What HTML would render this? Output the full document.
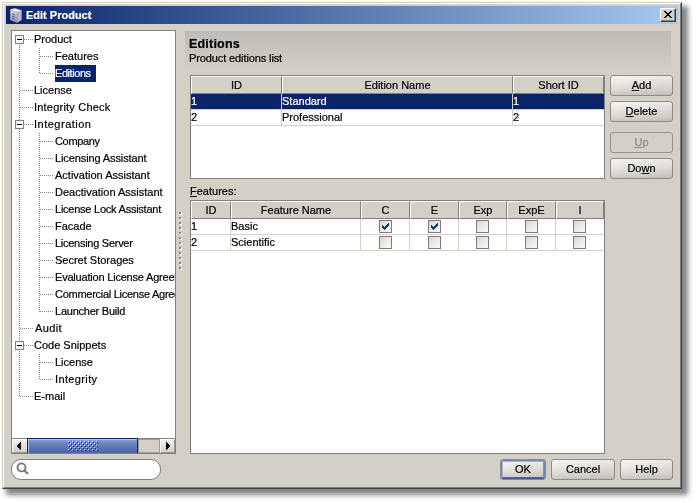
<!DOCTYPE html><html><head><meta charset="utf-8"><style>
*{margin:0;padding:0;box-sizing:border-box}
html,body{width:696px;height:503px;background:#fff;overflow:hidden;position:relative;-webkit-font-smoothing:antialiased;will-change:transform;font-family:"Liberation Sans",sans-serif;font-size:11px;color:#000}
div,span{position:absolute}
.t{white-space:nowrap;line-height:13px;height:13px;-webkit-text-stroke:0.2px currentColor}
.dh{height:1px;background:repeating-linear-gradient(to right,#808080 0 1px,transparent 1px 2px)}
.dv{width:1px;background:repeating-linear-gradient(to bottom,#808080 0 1px,transparent 1px 2px)}
.pb{width:9px;height:9px;border:1px solid #808080;background:#fff}
.pb:after{content:"";position:absolute;left:1px;top:3px;width:5px;height:1px;background:#000}
.hc{background:#D4D0C8;border-top:1px solid #fff;border-left:1px solid #fff;border-right:1px solid #808080;border-bottom:1px solid #808080;text-align:center;line-height:15px;height:18px}
.cb{width:13px;height:13px;border:1px solid #7B7B7B;background:linear-gradient(135deg,#D9D6CE 0%,#EBEAE5 50%,#F9F9F7 100%)}
.btn{border:1px solid #8D8B85;border-radius:3px;background:linear-gradient(to right,rgba(255,255,255,0.06),rgba(0,0,0,0.05)),linear-gradient(#F6F5F2 0%,#E9E7E2 40%,#DAD7D0 75%,#CBC7BD 100%);text-align:center;line-height:19px}
u{text-decoration:underline;text-decoration-thickness:1px;text-underline-offset:1px}
</style></head><body>
<div style="left:2px;top:2px;width:680px;height:487px;background:#D4D0C8;border-top:1px solid #D4D0C8;border-left:1px solid #D4D0C8;border-right:1px solid #404040;border-bottom:1px solid #404040;box-shadow:5px 5px 5px 1px rgba(0,0,0,0.48)"><div style="left:0;top:0;right:0;bottom:0;border-top:1px solid #fff;border-left:1px solid #fff;border-right:1px solid #808080;border-bottom:1px solid #808080"></div></div>
<div style="left:6px;top:6px;width:672px;height:18px;background:linear-gradient(to right,#0A246A,#A6CAF0)"></div>
<svg style="position:absolute;left:9px;top:7px" width="16" height="16" viewBox="0 0 16 16">
<defs><linearGradient id="ig" x1="0" y1="0" x2="0" y2="1"><stop offset="0" stop-color="#D6D8EA"/><stop offset="1" stop-color="#8E90B0"/></linearGradient>
<linearGradient id="ig2" x1="0" y1="0" x2="1" y2="0"><stop offset="0" stop-color="#9496B4"/><stop offset="0.5" stop-color="#C4C6DC"/><stop offset="1" stop-color="#A0A2BE"/></linearGradient></defs>
<path d="M1 2 L6 1 L13 3 L13 13 L8 16 L1 13 Z" fill="#6E7090"/>
<path d="M1.5 2.5 L6 1.5 L12.5 3.5 L8 5.5 Z" fill="#ECEDF6"/>
<path d="M1.5 2.5 L8 5.5 L8 15.5 L1.5 12.8 Z" fill="url(#ig)"/>
<path d="M8 5.5 L12.5 3.5 L12.5 12.8 L8 15.5 Z" fill="url(#ig2)"/>
<path d="M3 7 L6 8 M3 9 L6 10 M3 11 L6 12" stroke="#5A5C7E" stroke-width="0.9"/>
</svg>
<div class="t" style="left:26px;top:9px;font-weight:bold;color:#fff">Edit Product</div>
<div style="left:660px;top:8px;width:16px;height:14px;background:#D4D0C8;border-top:1px solid #fff;border-left:1px solid #fff;border-right:1px solid #404040;border-bottom:1px solid #404040"><div style="left:0;top:0;width:14px;height:12px;border-right:1px solid #808080;border-bottom:1px solid #808080"></div></div>
<svg style="position:absolute;left:664px;top:11px" width="8" height="7" shape-rendering="crispEdges"><rect x="0" y="0" width="1" height="1"/><rect x="1" y="0" width="1" height="1"/><rect x="6" y="0" width="1" height="1"/><rect x="7" y="0" width="1" height="1"/><rect x="1" y="1" width="1" height="1"/><rect x="2" y="1" width="1" height="1"/><rect x="5" y="1" width="1" height="1"/><rect x="6" y="1" width="1" height="1"/><rect x="2" y="2" width="1" height="1"/><rect x="3" y="2" width="1" height="1"/><rect x="4" y="2" width="1" height="1"/><rect x="5" y="2" width="1" height="1"/><rect x="3" y="3" width="1" height="1"/><rect x="4" y="3" width="1" height="1"/><rect x="2" y="4" width="1" height="1"/><rect x="3" y="4" width="1" height="1"/><rect x="4" y="4" width="1" height="1"/><rect x="5" y="4" width="1" height="1"/><rect x="1" y="5" width="1" height="1"/><rect x="2" y="5" width="1" height="1"/><rect x="5" y="5" width="1" height="1"/><rect x="6" y="5" width="1" height="1"/><rect x="0" y="6" width="1" height="1"/><rect x="1" y="6" width="1" height="1"/><rect x="6" y="6" width="1" height="1"/><rect x="7" y="6" width="1" height="1"/></svg>
<div style="left:11px;top:30px;width:165px;height:424px;background:#fff;border:1px solid #808080;overflow:hidden">
<div class="dv" style="left:7px;top:14px;height:352px"></div>
<div class="dv" style="left:27px;top:17px;height:26px"></div>
<div class="dv" style="left:27px;top:102px;height:179px"></div>
<div class="dv" style="left:27px;top:323px;height:26px"></div>
<div class="dh" style="left:12px;top:8px;width:10px"></div>
<div class="pb" style="left:3px;top:4px"></div>
<div class="t" style="left:22px;top:2px;">Product</div>
<div class="dh" style="left:28px;top:25px;width:14px"></div>
<div class="t" style="left:43px;top:19px;">Features</div>
<div class="dh" style="left:28px;top:42px;width:14px"></div>
<div style="left:43px;top:34px;width:41px;height:17px;background:#0A246A"></div>
<div class="t" style="left:43px;top:36px;color:#fff;letter-spacing:-0.43px;">Editions</div>
<div class="dh" style="left:8px;top:59px;width:14px"></div>
<div class="t" style="left:22px;top:53px;">License</div>
<div class="dh" style="left:8px;top:76px;width:14px"></div>
<div class="t" style="left:22px;top:70px;letter-spacing:0.21px;">Integrity Check</div>
<div class="dh" style="left:12px;top:93px;width:10px"></div>
<div class="pb" style="left:3px;top:89px"></div>
<div class="t" style="left:22px;top:87px;letter-spacing:0.5px;">Integration</div>
<div class="dh" style="left:28px;top:110px;width:14px"></div>
<div class="t" style="left:43px;top:104px;letter-spacing:-0.33px;">Company</div>
<div class="dh" style="left:28px;top:127px;width:14px"></div>
<div class="t" style="left:43px;top:121px;letter-spacing:-0.11px;">Licensing Assistant</div>
<div class="dh" style="left:28px;top:144px;width:14px"></div>
<div class="t" style="left:43px;top:138px;">Activation Assistant</div>
<div class="dh" style="left:28px;top:161px;width:14px"></div>
<div class="t" style="left:43px;top:155px;">Deactivation Assistant</div>
<div class="dh" style="left:28px;top:178px;width:14px"></div>
<div class="t" style="left:43px;top:172px;letter-spacing:-0.24px;">License Lock Assistant</div>
<div class="dh" style="left:28px;top:195px;width:14px"></div>
<div class="t" style="left:43px;top:189px;">Facade</div>
<div class="dh" style="left:28px;top:212px;width:14px"></div>
<div class="t" style="left:43px;top:206px;letter-spacing:-0.27px;">Licensing Server</div>
<div class="dh" style="left:28px;top:229px;width:14px"></div>
<div class="t" style="left:43px;top:223px;">Secret Storages</div>
<div class="dh" style="left:28px;top:246px;width:14px"></div>
<div class="t" style="left:43px;top:240px;letter-spacing:-0.2px;">Evaluation License Agreement</div>
<div class="dh" style="left:28px;top:263px;width:14px"></div>
<div class="t" style="left:43px;top:257px;letter-spacing:-0.27px;">Commercial License Agreement</div>
<div class="dh" style="left:28px;top:280px;width:14px"></div>
<div class="t" style="left:43px;top:274px;letter-spacing:-0.23px;">Launcher Build</div>
<div class="dh" style="left:8px;top:297px;width:14px"></div>
<div class="t" style="left:23px;top:291px;letter-spacing:0.4px;">Audit</div>
<div class="dh" style="left:12px;top:314px;width:10px"></div>
<div class="pb" style="left:3px;top:310px"></div>
<div class="t" style="left:22px;top:308px;">Code Snippets</div>
<div class="dh" style="left:28px;top:331px;width:14px"></div>
<div class="t" style="left:43px;top:325px;">License</div>
<div class="dh" style="left:28px;top:348px;width:14px"></div>
<div class="t" style="left:43px;top:342px;letter-spacing:0.37px;">Integrity</div>
<div class="dh" style="left:8px;top:365px;width:14px"></div>
<div class="t" style="left:22px;top:359px;">E-mail</div>
</div>
<div style="left:12px;top:438px;width:163px;height:1px;background:#808080"></div>
<div style="left:12px;top:439px;width:15px;height:14px;background:linear-gradient(#F2F1EC,#D4D0C8);border-left:1px solid #fff;border-top:1px solid #fff;border-bottom:1px solid #9A9791"></div>
<svg style="position:absolute;left:17px;top:442px" width="4" height="8" shape-rendering="crispEdges"><rect x="3" y="0" width="1" height="1"/><rect x="2" y="1" width="1" height="1"/><rect x="3" y="1" width="1" height="1"/><rect x="1" y="2" width="1" height="1"/><rect x="2" y="2" width="1" height="1"/><rect x="3" y="2" width="1" height="1"/><rect x="0" y="3" width="1" height="1"/><rect x="1" y="3" width="1" height="1"/><rect x="2" y="3" width="1" height="1"/><rect x="3" y="3" width="1" height="1"/><rect x="0" y="4" width="1" height="1"/><rect x="1" y="4" width="1" height="1"/><rect x="2" y="4" width="1" height="1"/><rect x="3" y="4" width="1" height="1"/><rect x="1" y="5" width="1" height="1"/><rect x="2" y="5" width="1" height="1"/><rect x="3" y="5" width="1" height="1"/><rect x="2" y="6" width="1" height="1"/><rect x="3" y="6" width="1" height="1"/><rect x="3" y="7" width="1" height="1"/></svg>
<div style="left:27px;top:438px;width:111px;height:15px;border:1px solid #0A246A;border-bottom:none;background:linear-gradient(#8FA6D4 0%,#6D86C0 30%,#5571B0 70%,#4A64A6 100%)"><div style="left:0;top:0;width:1px;height:14px;background:#A8C4F0"></div><div style="left:0;top:0;width:109px;height:1px;background:#A8C8F8"></div></div>
<svg style="position:absolute;left:68px;top:441px" width="31" height="11" shape-rendering="crispEdges"><rect x="0" y="0" width="1" height="1" fill="#E4ECFF"/><rect x="1" y="1" width="1" height="1" fill="#0C2A7A"/><rect x="4" y="0" width="1" height="1" fill="#E4ECFF"/><rect x="5" y="1" width="1" height="1" fill="#0C2A7A"/><rect x="8" y="0" width="1" height="1" fill="#E4ECFF"/><rect x="9" y="1" width="1" height="1" fill="#0C2A7A"/><rect x="12" y="0" width="1" height="1" fill="#E4ECFF"/><rect x="13" y="1" width="1" height="1" fill="#0C2A7A"/><rect x="16" y="0" width="1" height="1" fill="#E4ECFF"/><rect x="17" y="1" width="1" height="1" fill="#0C2A7A"/><rect x="20" y="0" width="1" height="1" fill="#E4ECFF"/><rect x="21" y="1" width="1" height="1" fill="#0C2A7A"/><rect x="24" y="0" width="1" height="1" fill="#E4ECFF"/><rect x="25" y="1" width="1" height="1" fill="#0C2A7A"/><rect x="28" y="0" width="1" height="1" fill="#E4ECFF"/><rect x="29" y="1" width="1" height="1" fill="#0C2A7A"/><rect x="2" y="2" width="1" height="1" fill="#E4ECFF"/><rect x="3" y="3" width="1" height="1" fill="#0C2A7A"/><rect x="6" y="2" width="1" height="1" fill="#E4ECFF"/><rect x="7" y="3" width="1" height="1" fill="#0C2A7A"/><rect x="10" y="2" width="1" height="1" fill="#E4ECFF"/><rect x="11" y="3" width="1" height="1" fill="#0C2A7A"/><rect x="14" y="2" width="1" height="1" fill="#E4ECFF"/><rect x="15" y="3" width="1" height="1" fill="#0C2A7A"/><rect x="18" y="2" width="1" height="1" fill="#E4ECFF"/><rect x="19" y="3" width="1" height="1" fill="#0C2A7A"/><rect x="22" y="2" width="1" height="1" fill="#E4ECFF"/><rect x="23" y="3" width="1" height="1" fill="#0C2A7A"/><rect x="26" y="2" width="1" height="1" fill="#E4ECFF"/><rect x="27" y="3" width="1" height="1" fill="#0C2A7A"/><rect x="0" y="4" width="1" height="1" fill="#E4ECFF"/><rect x="1" y="5" width="1" height="1" fill="#0C2A7A"/><rect x="4" y="4" width="1" height="1" fill="#E4ECFF"/><rect x="5" y="5" width="1" height="1" fill="#0C2A7A"/><rect x="8" y="4" width="1" height="1" fill="#E4ECFF"/><rect x="9" y="5" width="1" height="1" fill="#0C2A7A"/><rect x="12" y="4" width="1" height="1" fill="#E4ECFF"/><rect x="13" y="5" width="1" height="1" fill="#0C2A7A"/><rect x="16" y="4" width="1" height="1" fill="#E4ECFF"/><rect x="17" y="5" width="1" height="1" fill="#0C2A7A"/><rect x="20" y="4" width="1" height="1" fill="#E4ECFF"/><rect x="21" y="5" width="1" height="1" fill="#0C2A7A"/><rect x="24" y="4" width="1" height="1" fill="#E4ECFF"/><rect x="25" y="5" width="1" height="1" fill="#0C2A7A"/><rect x="28" y="4" width="1" height="1" fill="#E4ECFF"/><rect x="29" y="5" width="1" height="1" fill="#0C2A7A"/><rect x="2" y="6" width="1" height="1" fill="#E4ECFF"/><rect x="3" y="7" width="1" height="1" fill="#0C2A7A"/><rect x="6" y="6" width="1" height="1" fill="#E4ECFF"/><rect x="7" y="7" width="1" height="1" fill="#0C2A7A"/><rect x="10" y="6" width="1" height="1" fill="#E4ECFF"/><rect x="11" y="7" width="1" height="1" fill="#0C2A7A"/><rect x="14" y="6" width="1" height="1" fill="#E4ECFF"/><rect x="15" y="7" width="1" height="1" fill="#0C2A7A"/><rect x="18" y="6" width="1" height="1" fill="#E4ECFF"/><rect x="19" y="7" width="1" height="1" fill="#0C2A7A"/><rect x="22" y="6" width="1" height="1" fill="#E4ECFF"/><rect x="23" y="7" width="1" height="1" fill="#0C2A7A"/><rect x="26" y="6" width="1" height="1" fill="#E4ECFF"/><rect x="27" y="7" width="1" height="1" fill="#0C2A7A"/><rect x="0" y="8" width="1" height="1" fill="#E4ECFF"/><rect x="1" y="9" width="1" height="1" fill="#0C2A7A"/><rect x="4" y="8" width="1" height="1" fill="#E4ECFF"/><rect x="5" y="9" width="1" height="1" fill="#0C2A7A"/><rect x="8" y="8" width="1" height="1" fill="#E4ECFF"/><rect x="9" y="9" width="1" height="1" fill="#0C2A7A"/><rect x="12" y="8" width="1" height="1" fill="#E4ECFF"/><rect x="13" y="9" width="1" height="1" fill="#0C2A7A"/><rect x="16" y="8" width="1" height="1" fill="#E4ECFF"/><rect x="17" y="9" width="1" height="1" fill="#0C2A7A"/><rect x="20" y="8" width="1" height="1" fill="#E4ECFF"/><rect x="21" y="9" width="1" height="1" fill="#0C2A7A"/><rect x="24" y="8" width="1" height="1" fill="#E4ECFF"/><rect x="25" y="9" width="1" height="1" fill="#0C2A7A"/><rect x="28" y="8" width="1" height="1" fill="#E4ECFF"/><rect x="29" y="9" width="1" height="1" fill="#0C2A7A"/></svg>
<div style="left:138px;top:439px;width:22px;height:14px;background:#D4D0C8;border:1px solid #A09D96"></div>
<div style="left:160px;top:439px;width:15px;height:14px;background:linear-gradient(#F2F1EC,#D4D0C8);border-left:1px solid #fff;border-top:1px solid #fff;border-right:1px solid #9A9791;border-bottom:1px solid #9A9791"></div>
<svg style="position:absolute;left:166px;top:442px" width="4" height="8" shape-rendering="crispEdges"><rect x="0" y="0" width="1" height="1"/><rect x="0" y="1" width="1" height="1"/><rect x="1" y="1" width="1" height="1"/><rect x="0" y="2" width="1" height="1"/><rect x="1" y="2" width="1" height="1"/><rect x="2" y="2" width="1" height="1"/><rect x="0" y="3" width="1" height="1"/><rect x="1" y="3" width="1" height="1"/><rect x="2" y="3" width="1" height="1"/><rect x="3" y="3" width="1" height="1"/><rect x="0" y="4" width="1" height="1"/><rect x="1" y="4" width="1" height="1"/><rect x="2" y="4" width="1" height="1"/><rect x="3" y="4" width="1" height="1"/><rect x="0" y="5" width="1" height="1"/><rect x="1" y="5" width="1" height="1"/><rect x="2" y="5" width="1" height="1"/><rect x="0" y="6" width="1" height="1"/><rect x="1" y="6" width="1" height="1"/><rect x="0" y="7" width="1" height="1"/></svg>
<div style="left:11px;top:459px;width:150px;height:21px;border:1px solid #7F7F7F;border-radius:10px;background:#fff"></div>
<svg style="position:absolute;left:15px;top:462px" width="15" height="14" viewBox="0 0 15 14"><circle cx="6.5" cy="5.4" r="4" fill="none" stroke="#7A7A7A" stroke-width="1.9"/><path d="M9.3 8.3 L13 12" stroke="#7A7A7A" stroke-width="2.3"/></svg>
<svg style="position:absolute;left:179px;top:212px" width="3" height="60" shape-rendering="crispEdges"><rect x="1" y="1" width="2" height="2" fill="#fff"/><rect x="0" y="0" width="2" height="2" fill="#8A8780"/><rect x="1" y="6" width="2" height="2" fill="#fff"/><rect x="0" y="5" width="2" height="2" fill="#8A8780"/><rect x="1" y="11" width="2" height="2" fill="#fff"/><rect x="0" y="10" width="2" height="2" fill="#8A8780"/><rect x="1" y="16" width="2" height="2" fill="#fff"/><rect x="0" y="15" width="2" height="2" fill="#8A8780"/><rect x="1" y="21" width="2" height="2" fill="#fff"/><rect x="0" y="20" width="2" height="2" fill="#8A8780"/><rect x="1" y="26" width="2" height="2" fill="#fff"/><rect x="0" y="25" width="2" height="2" fill="#8A8780"/><rect x="1" y="31" width="2" height="2" fill="#fff"/><rect x="0" y="30" width="2" height="2" fill="#8A8780"/><rect x="1" y="36" width="2" height="2" fill="#fff"/><rect x="0" y="35" width="2" height="2" fill="#8A8780"/><rect x="1" y="41" width="2" height="2" fill="#fff"/><rect x="0" y="40" width="2" height="2" fill="#8A8780"/><rect x="1" y="46" width="2" height="2" fill="#fff"/><rect x="0" y="45" width="2" height="2" fill="#8A8780"/><rect x="1" y="51" width="2" height="2" fill="#fff"/><rect x="0" y="50" width="2" height="2" fill="#8A8780"/><rect x="1" y="56" width="2" height="2" fill="#fff"/><rect x="0" y="55" width="2" height="2" fill="#8A8780"/></svg>
<div style="left:185px;top:31px;width:486px;height:38px;background:linear-gradient(#C0BCB4,#D3CFC7)"></div>
<div class="t" style="left:189px;top:37px;font-weight:bold;font-size:12.5px;letter-spacing:0.2px;line-height:15px;height:15px">Editions</div>
<div class="t" style="left:189px;top:52px;letter-spacing:-0.11px">Product editions list</div>
<div style="left:190px;top:75px;width:415px;height:104px;border:1px solid #808080;background:#fff"></div>
<div class="hc t" style="left:191px;top:76px;width:91px;height:18px;line-height:17px">ID</div>
<div class="hc t" style="left:282px;top:76px;width:231px;height:18px;line-height:17px">Edition Name</div>
<div class="hc t" style="left:513px;top:76px;width:91px;height:18px;line-height:17px">Short ID</div>
<div style="left:191px;top:94px;width:413px;height:15px;background:#0A246A"></div>
<div style="left:191px;top:109px;width:413px;height:1px;background:#D4D0C8"></div>
<div style="left:281px;top:94px;width:1px;height:16px;background:#D4D0C8"></div>
<div class="t" style="left:191px;top:95px;color:#fff">1</div>
<div style="left:512px;top:94px;width:1px;height:16px;background:#D4D0C8"></div>
<div class="t" style="left:282px;top:95px;color:#fff">Standard</div>
<div class="t" style="left:513px;top:95px;color:#fff">1</div>
<div style="left:191px;top:125px;width:413px;height:1px;background:#D4D0C8"></div>
<div style="left:281px;top:110px;width:1px;height:16px;background:#D4D0C8"></div>
<div class="t" style="left:191px;top:111px;color:#000">2</div>
<div style="left:512px;top:110px;width:1px;height:16px;background:#D4D0C8"></div>
<div class="t" style="left:282px;top:111px;color:#000">Professional</div>
<div class="t" style="left:513px;top:111px;color:#000">2</div>
<div class="t" style="left:190px;top:185px"><u>F</u>eatures:</div>
<div style="left:190px;top:200px;width:415px;height:254px;border:1px solid #808080;background:#fff"></div>
<div class="hc t" style="left:191px;top:201px;width:40px;height:18px;line-height:17px">ID</div>
<div class="hc t" style="left:231px;top:201px;width:130px;height:18px;line-height:17px">Feature Name</div>
<div class="hc t" style="left:361px;top:201px;width:49px;height:18px;line-height:17px">C</div>
<div class="hc t" style="left:410px;top:201px;width:49px;height:18px;line-height:17px">E</div>
<div class="hc t" style="left:459px;top:201px;width:48px;height:18px;line-height:17px">Exp</div>
<div class="hc t" style="left:507px;top:201px;width:49px;height:18px;line-height:17px">ExpE</div>
<div class="hc t" style="left:556px;top:201px;width:48px;height:18px;line-height:17px">I</div>
<div style="left:191px;top:234px;width:413px;height:1px;background:#D4D0C8"></div>
<div style="left:230px;top:219px;width:1px;height:16px;background:#D4D0C8"></div>
<div class="t" style="left:191px;top:220px;color:#000">1</div>
<div style="left:360px;top:219px;width:1px;height:16px;background:#D4D0C8"></div>
<div class="t" style="left:231px;top:220px;color:#000">Basic</div>
<div style="left:409px;top:219px;width:1px;height:16px;background:#D4D0C8"></div>
<div class="cb" style="left:379px;top:220px"></div>
<svg style="position:absolute;left:382px;top:223px" width="7" height="7" fill="#1E2E84" shape-rendering="crispEdges"><rect x="6" y="0" width="1" height="1"/><rect x="5" y="1" width="1" height="1"/><rect x="6" y="1" width="1" height="1"/><rect x="0" y="2" width="1" height="1"/><rect x="4" y="2" width="1" height="1"/><rect x="5" y="2" width="1" height="1"/><rect x="6" y="2" width="1" height="1"/><rect x="0" y="3" width="1" height="1"/><rect x="1" y="3" width="1" height="1"/><rect x="3" y="3" width="1" height="1"/><rect x="4" y="3" width="1" height="1"/><rect x="5" y="3" width="1" height="1"/><rect x="0" y="4" width="1" height="1"/><rect x="1" y="4" width="1" height="1"/><rect x="2" y="4" width="1" height="1"/><rect x="3" y="4" width="1" height="1"/><rect x="4" y="4" width="1" height="1"/><rect x="1" y="5" width="1" height="1"/><rect x="2" y="5" width="1" height="1"/><rect x="3" y="5" width="1" height="1"/><rect x="2" y="6" width="1" height="1"/></svg>
<div style="left:458px;top:219px;width:1px;height:16px;background:#D4D0C8"></div>
<div class="cb" style="left:428px;top:220px"></div>
<svg style="position:absolute;left:431px;top:223px" width="7" height="7" fill="#1E2E84" shape-rendering="crispEdges"><rect x="6" y="0" width="1" height="1"/><rect x="5" y="1" width="1" height="1"/><rect x="6" y="1" width="1" height="1"/><rect x="0" y="2" width="1" height="1"/><rect x="4" y="2" width="1" height="1"/><rect x="5" y="2" width="1" height="1"/><rect x="6" y="2" width="1" height="1"/><rect x="0" y="3" width="1" height="1"/><rect x="1" y="3" width="1" height="1"/><rect x="3" y="3" width="1" height="1"/><rect x="4" y="3" width="1" height="1"/><rect x="5" y="3" width="1" height="1"/><rect x="0" y="4" width="1" height="1"/><rect x="1" y="4" width="1" height="1"/><rect x="2" y="4" width="1" height="1"/><rect x="3" y="4" width="1" height="1"/><rect x="4" y="4" width="1" height="1"/><rect x="1" y="5" width="1" height="1"/><rect x="2" y="5" width="1" height="1"/><rect x="3" y="5" width="1" height="1"/><rect x="2" y="6" width="1" height="1"/></svg>
<div style="left:506px;top:219px;width:1px;height:16px;background:#D4D0C8"></div>
<div class="cb" style="left:476px;top:220px"></div>
<div style="left:555px;top:219px;width:1px;height:16px;background:#D4D0C8"></div>
<div class="cb" style="left:525px;top:220px"></div>
<div class="cb" style="left:573px;top:220px"></div>
<div style="left:191px;top:250px;width:413px;height:1px;background:#D4D0C8"></div>
<div style="left:230px;top:235px;width:1px;height:16px;background:#D4D0C8"></div>
<div class="t" style="left:191px;top:236px;color:#000">2</div>
<div style="left:360px;top:235px;width:1px;height:16px;background:#D4D0C8"></div>
<div class="t" style="left:231px;top:236px;color:#000">Scientific</div>
<div style="left:409px;top:235px;width:1px;height:16px;background:#D4D0C8"></div>
<div class="cb" style="left:379px;top:236px"></div>
<div style="left:458px;top:235px;width:1px;height:16px;background:#D4D0C8"></div>
<div class="cb" style="left:428px;top:236px"></div>
<div style="left:506px;top:235px;width:1px;height:16px;background:#D4D0C8"></div>
<div class="cb" style="left:476px;top:236px"></div>
<div style="left:555px;top:235px;width:1px;height:16px;background:#D4D0C8"></div>
<div class="cb" style="left:525px;top:236px"></div>
<div class="cb" style="left:573px;top:236px"></div>
<div class="btn t" style="left:610px;top:75px;width:63px;height:21px;line-height:19px"><u>A</u>dd</div>
<div class="btn t" style="left:610px;top:101px;width:63px;height:21px;line-height:19px"><u>D</u>elete</div>
<div class="t" style="left:610px;top:132px;width:63px;height:21px;border:1px solid #96938C;border-radius:3px;background:#D4D0C8;text-align:center;line-height:19px;color:#8E8B85"><u>U</u>p</div>
<div class="btn t" style="left:610px;top:158px;width:63px;height:21px;line-height:19px">Do<u>w</u>n</div>
<div class="btn t" style="left:500px;top:459px;width:46px;height:21px;line-height:19px"><div style="left:0;top:0;right:0;bottom:0;border:1px solid #7383B8;border-bottom-color:#43569A;border-radius:2px"><div style="left:0;top:0;right:0;bottom:0;border:1px solid #A8B3D5;border-right-color:#8390C0;border-bottom-color:#56679F"></div></div>OK</div>
<div class="btn t" style="left:551px;top:459px;width:64px;height:21px;line-height:19px">Cancel</div>
<div class="btn t" style="left:620px;top:459px;width:53px;height:21px;line-height:19px">Help</div>
</body></html>
